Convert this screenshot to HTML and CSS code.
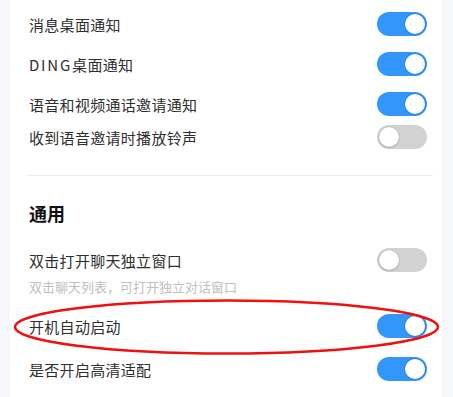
FILE: index.html
```html
<!DOCTYPE html>
<html lang="zh">
<head>
<meta charset="utf-8">
<link rel="stylesheet" href="styles.css">
</head>
<body>
<div class="panel">
  <div class="row r40"><span class="label">消息桌面通知</span><span class="switch on"></span></div>
  <div class="row r40"><span class="label"><span class="latin">DING</span>桌面通知</span><span class="switch on"></span></div>
  <div class="row r40"><span class="label">语音和视频通话邀请通知</span><span class="switch on"></span></div>
  <div class="row r26"><span class="label">收到语音邀请时播放铃声</span><span class="switch"></span></div>
  <div class="divider"></div>
  <div class="heading">通用</div>
  <div class="row r24 first"><span class="label">双击打开聊天独立窗口</span><span class="switch"></span></div>
  <div class="hint">双击聊天列表，可打开独立对话窗口</div>
  <div class="row r24 spaced"><span class="label">开机自动启动</span><span class="switch on"></span></div>
  <div class="row r24 spaced"><span class="label">是否开启高清适配</span><span class="switch on"></span></div>
</div>
<svg class="mark" width="427" height="58" viewBox="0 0 427 58">
  <ellipse cx="213.5" cy="29" rx="211.5" ry="26.5" fill="none" stroke="#f01010" stroke-width="2.4"/>
</svg>
</body>
</html>
```
FILE: styles.css
```css
html, body {
  margin: 0;
  padding: 0;
  height: 100%;
  background: #f6f8fc;
  font-family: "Noto Sans CJK SC", "Noto Sans", sans-serif;
  overflow: hidden;
}
body {
  position: relative;
}
.panel {
  margin: 0 11px 0 10px;
  height: 100%;
  background: #ffffff;
  padding: 4px 15px 0 19px;
  box-sizing: border-box;
  display: flex;
  flex-direction: column;
}
.row {
  display: flex;
  align-items: center;
  justify-content: space-between;
}
.r40 { height: 40px; }
.r26 { height: 26px; }
.r24 { height: 24px; }
.label {
  font-size: 15px;
  color: #2f2f2f;
  letter-spacing: 0.3px;
}
.latin {
  letter-spacing: 1.8px;
}
.switch {
  position: relative;
  width: 50px;
  height: 24px;
  border-radius: 12px;
  background: #d2d2d2;
  flex: none;
}
.switch::after {
  content: "";
  position: absolute;
  top: 2px;
  left: 2px;
  width: 20px;
  height: 20px;
  border-radius: 50%;
  background: #fff;
  box-shadow: 0 0 1px rgba(0,0,0,0.35), 0 1px 2px rgba(0,0,0,0.15);
}
.switch.on {
  background: #3296fa;
}
.switch.on::after {
  left: 28px;
  box-shadow: 0 0 0 1px rgba(40,120,220,0.5);
}
.divider {
  height: 1px;
  background: #eeeeee;
  margin: 25px -6px 0 -2px;
}
.heading {
  margin-top: 25px;
  height: 24px;
  line-height: 24px;
  font-size: 18px;
  font-weight: bold;
  color: #111;
}
.first { margin-top: 23px; }
.hint {
  margin-top: 7px;
  height: 16px;
  line-height: 16px;
  font-size: 13px;
  color: #c0c0c0;
}
.spaced { margin-top: 19px; }
.mark {
  position: absolute;
  left: 13px;
  top: 298px;
}
```
